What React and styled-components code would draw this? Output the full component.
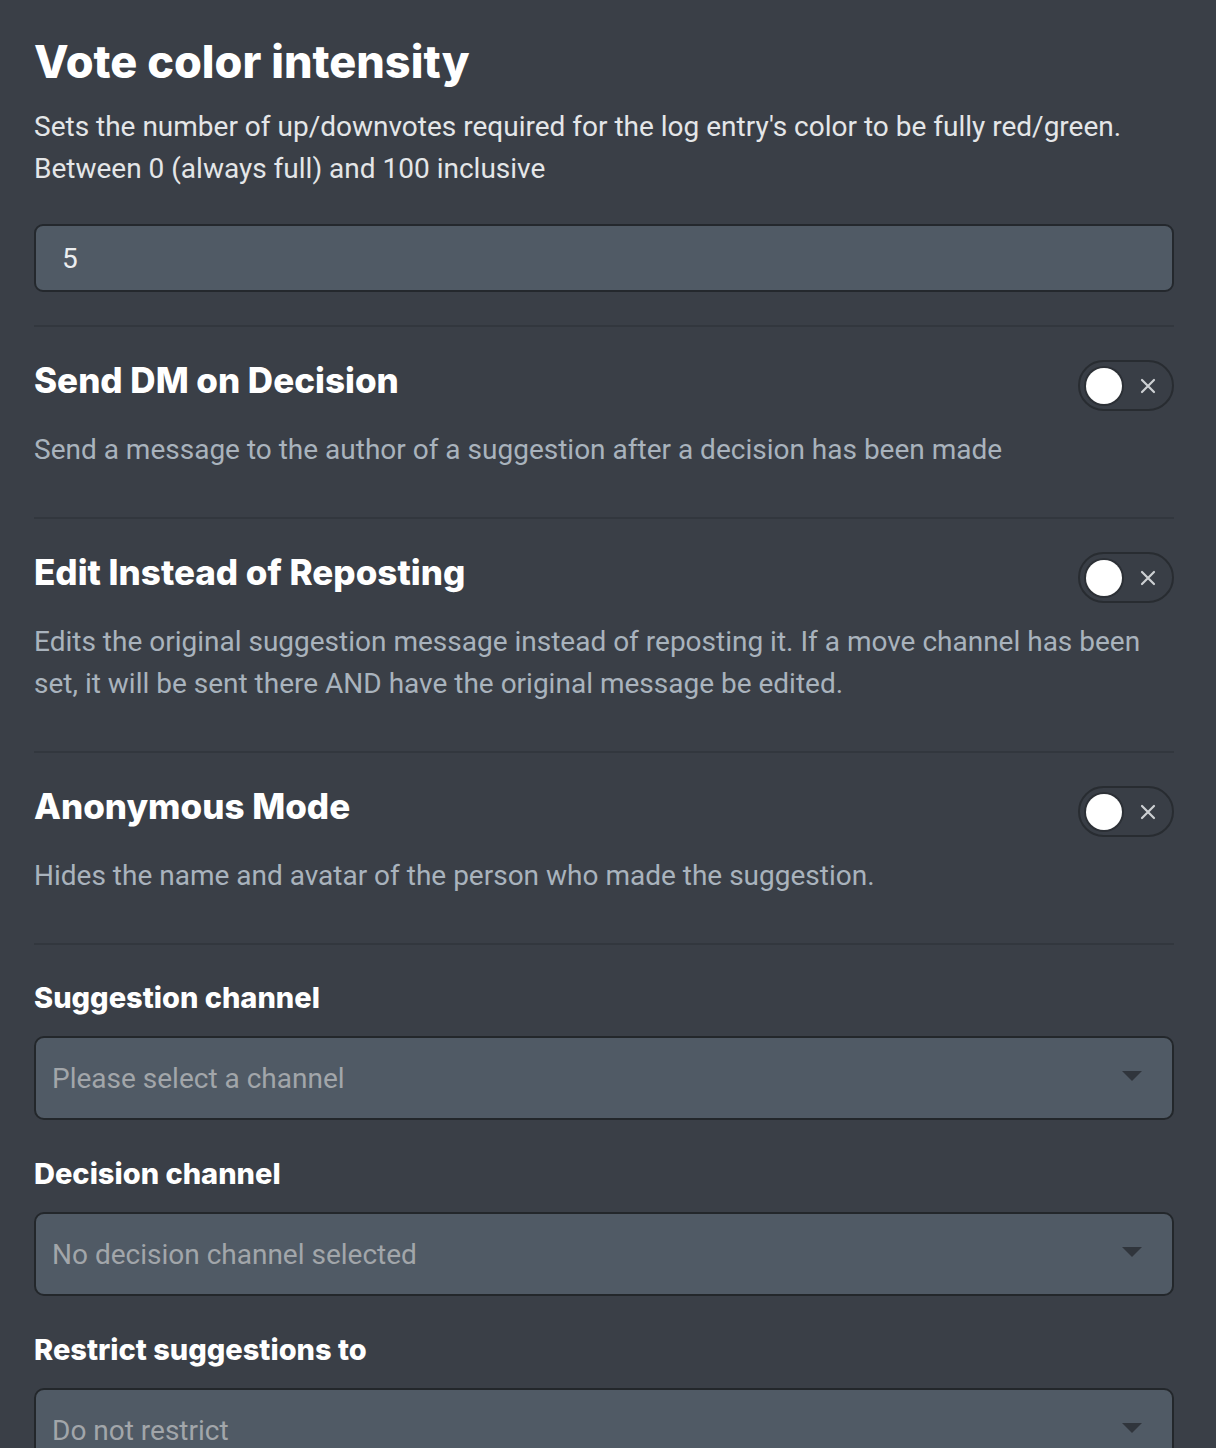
import React from "react";
import styled, { createGlobalStyle } from "styled-components";

const Global = createGlobalStyle`
  html, body {
    margin: 0;
    padding: 0;
    background: #3a3f47;
  }
  body {
    font-family: Roboto, "Liberation Sans", sans-serif;
  }
`;

const Page = styled.div`
  min-height: 1448px;
  padding: 34px 42px 0 34px;
  background: #3a3f47;
  box-sizing: border-box;
`;

const Title = styled.h1`
  margin: 0;
  font-family: Inter, "Liberation Sans", sans-serif;
  font-weight: 800;
  font-size: 45px;
  line-height: 56px;
  color: #ffffff;
`;

const Lead = styled.p`
  margin: 16px 0 0;
  font-size: 28px;
  line-height: 42px;
  color: #e4e6e8;
`;

const NumberInput = styled.input`
  display: block;
  box-sizing: border-box;
  width: 100%;
  height: 68px;
  margin-top: 34px;
  padding: 0 26px;
  border: 2px solid #24282d;
  border-radius: 9px;
  background: #505a65;
  color: #eceef0;
  font-family: Roboto, "Liberation Sans", sans-serif;
  font-size: 28px;
  outline: none;
`;

const Divider = styled.hr`
  margin: 33px 0 0;
  border: 0;
  border-top: 2px solid #32373e;
`;

const Section = styled.section`
  padding: 31px 0 46px;
  border-bottom: 2px solid #32373e;
`;

const Row = styled.div`
  display: flex;
  justify-content: space-between;
  align-items: flex-start;
  height: 44px;
`;

const Heading = styled.h2`
  margin: 0;
  font-family: Inter, "Liberation Sans", sans-serif;
  font-weight: 800;
  font-size: 35px;
  line-height: 44px;
  color: #ffffff;
`;

const Desc = styled.p`
  margin: 27px 0 0;
  font-size: 28px;
  line-height: 42px;
  color: #a9b3bd;
`;

const Toggle = styled.div`
  box-sizing: border-box;
  flex-shrink: 0;
  width: 96px;
  height: 51px;
  margin-top: 2px;
  border: 2px solid #282c31;
  border-radius: 26px;
  background: #393e46;
  display: flex;
  align-items: center;
  justify-content: space-between;
  padding: 0 16px 0 6px;
`;

const Knob = styled.span`
  width: 36px;
  height: 36px;
  border-radius: 50%;
  background: #ffffff;
  box-shadow: 0 0 0 2px #2c3036;
`;

const Field = styled.div`
  margin-top: ${({ $first }) => ($first ? "35px" : "36px")};
`;

const Label = styled.div`
  font-family: Inter, "Liberation Sans", sans-serif;
  font-weight: 800;
  font-size: 29px;
  line-height: 36px;
  color: #ffffff;
`;

const Select = styled.div`
  box-sizing: border-box;
  height: 84px;
  margin-top: 20px;
  padding: 0 30px 0 16px;
  border: 2px solid #23272b;
  border-radius: 10px;
  background: #505a65;
  display: flex;
  align-items: center;
  justify-content: space-between;
  font-size: 28px;
  color: #a2a6aa;
`;

const Caret = styled.span`
  width: 0;
  height: 0;
  border-left: 10px solid transparent;
  border-right: 10px solid transparent;
  border-top: 10px solid #30353c;
  margin-top: -4px;
`;

const Cross = () => (
  <svg width="16" height="16" viewBox="0 0 16 16">
    <path d="M2 2L14 14M14 2L2 14" stroke="#cdd0d3" strokeWidth="2.2" strokeLinecap="round" />
  </svg>
);

const Switch = () => (
  <Toggle>
    <Knob />
    <Cross />
  </Toggle>
);

const toggles = [
  {
    title: "Send DM on Decision",
    desc: "Send a message to the author of a suggestion after a decision has been made",
  },
  {
    title: "Edit Instead of Reposting",
    desc: "Edits the original suggestion message instead of reposting it. If a move channel has been set, it will be sent there AND have the original message be edited.",
  },
  {
    title: "Anonymous Mode",
    desc: "Hides the name and avatar of the person who made the suggestion.",
  },
];

const selects = [
  { label: "Suggestion channel", value: "Please select a channel" },
  { label: "Decision channel", value: "No decision channel selected" },
  { label: "Restrict suggestions to", value: "Do not restrict" },
];

export default function App() {
  return (
    <Page>
      <Global />
      <Title>Vote color intensity</Title>
      <Lead>
        Sets the number of up/downvotes required for the log entry's color to be fully red/green.
        <br />
        Between 0 (always full) and 100 inclusive
      </Lead>
      <NumberInput defaultValue="5" />
      <Divider />
      {toggles.map((t) => (
        <Section key={t.title}>
          <Row>
            <Heading>{t.title}</Heading>
            <Switch />
          </Row>
          <Desc>{t.desc}</Desc>
        </Section>
      ))}
      {selects.map((s, i) => (
        <Field key={s.label} $first={i === 0}>
          <Label>{s.label}</Label>
          <Select>
            <span>{s.value}</span>
            <Caret />
          </Select>
        </Field>
      ))}
    </Page>
  );
}
